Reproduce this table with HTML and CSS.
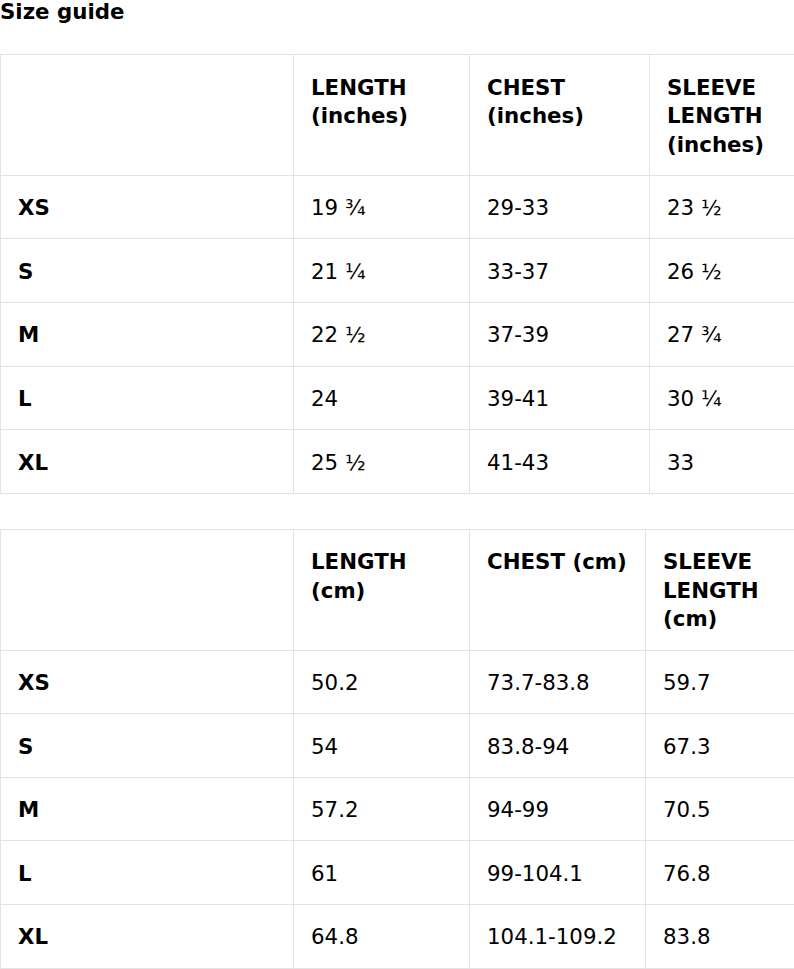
FILE: index.html
```html
<!DOCTYPE html>
<html lang="en">
<head>
<meta charset="utf-8">
<title>Size guide</title>
<link rel="stylesheet" href="styles.css">
</head>
<body>
<div class="guide">
  <h2 class="guide-title">Size guide</h2>

  <table class="size-table">
    <colgroup>
      <col class="col-size"><col class="col-a"><col class="col-b-in"><col class="col-c">
    </colgroup>
    <thead>
      <tr><th></th><th>LENGTH (inches)</th><th>CHEST (inches)</th><th>SLEEVE LENGTH (inches)</th></tr>
    </thead>
    <tbody>
      <tr><th>XS</th><td>19 ¾</td><td>29-33</td><td>23 ½</td></tr>
      <tr><th>S</th><td>21 ¼</td><td>33-37</td><td>26 ½</td></tr>
      <tr><th>M</th><td>22 ½</td><td>37-39</td><td>27 ¾</td></tr>
      <tr><th>L</th><td>24</td><td>39-41</td><td>30 ¼</td></tr>
      <tr><th>XL</th><td>25 ½</td><td>41-43</td><td>33</td></tr>
    </tbody>
  </table>

  <table class="size-table">
    <colgroup>
      <col class="col-size"><col class="col-a"><col class="col-b-cm"><col class="col-c">
    </colgroup>
    <thead>
      <tr><th></th><th>LENGTH (cm)</th><th>CHEST (cm)</th><th>SLEEVE LENGTH (cm)</th></tr>
    </thead>
    <tbody>
      <tr><th>XS</th><td>50.2</td><td>73.7-83.8</td><td>59.7</td></tr>
      <tr><th>S</th><td>54</td><td>83.8-94</td><td>67.3</td></tr>
      <tr><th>M</th><td>57.2</td><td>94-99</td><td>70.5</td></tr>
      <tr><th>L</th><td>61</td><td>99-104.1</td><td>76.8</td></tr>
      <tr><th>XL</th><td>64.8</td><td>104.1-109.2</td><td>83.8</td></tr>
    </tbody>
  </table>
</div>
</body>
</html>
```

FILE: styles.css
```css
html, body {
  margin: 0;
  padding: 0;
  background: #fff;
}

html {
  overflow: hidden;
}

body {
  font-family: "DejaVu Sans", Verdana, sans-serif;
  font-size: 21.33px;
  color: #000;
}

.guide {
  width: 794px;
}

.guide-title {
  margin: 0 0 30px 0;
  font-size: 21.33px;
  line-height: 24px;
  font-weight: bold;
}

.size-table {
  width: 820px;
  table-layout: fixed;
  border-collapse: collapse;
  margin: 0 0 35px 0;
  line-height: 28.6px;
}

.col-size { width: 293px; }
.col-a { width: 176px; }
.col-b-in { width: 180px; }
.col-b-cm { width: 176px; }

.size-table th,
.size-table td {
  border: 1px solid #e3e3e3;
  padding: 18.5px 17px 15.5px;
  text-align: left;
  vertical-align: top;
}

.size-table th {
  font-weight: bold;
}

.size-table td {
  font-weight: normal;
}
```
